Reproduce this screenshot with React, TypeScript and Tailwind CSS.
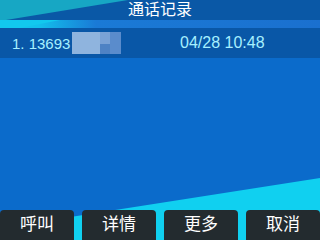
import React from "react";

const Background = () => (
  <svg
    className="absolute inset-0 h-full w-full"
    viewBox="0 0 320 240"
    preserveAspectRatio="none"
  >
    <defs>
      <linearGradient id="stripe" x1="0" x2="1" y1="0" y2="0">
        <stop offset="0" stopColor="#12c6ee" />
        <stop offset="0.12" stopColor="#12c0ec" />
        <stop offset="0.3" stopColor="#1a7ad6" />
        <stop offset="1" stopColor="#1a70cf" />
      </linearGradient>
    </defs>
    <rect x="0" y="0" width="320" height="240" fill="#0b6bcb" />
    <rect x="0" y="0" width="320" height="20" fill="#0a58a6" />
    <polygon points="0,0 128,0 0,21" fill="#17a7c4" />
    <rect x="0" y="20" width="320" height="8" fill="url(#stripe)" />
    <polygon points="0,20 60,20 20,28 0,28" fill="#12c8ee" />
    <rect x="0" y="28" width="320" height="30" fill="#0957a7" />
    <polygon points="0,228 320,178 320,240 0,240" fill="#10d0f0" />
  </svg>
);

const buttons = ["呼叫", "详情", "更多", "取消"];

export default function App() {
  return (
    <div
      className="relative w-[320px] h-[240px] overflow-hidden flex flex-col"
      style={{ fontFamily: '"Liberation Sans", "Noto Sans CJK SC", sans-serif' }}
    >
      <Background />
      <div className="relative h-[20px] flex items-center justify-center text-white text-[16px] leading-none">
        通话记录
      </div>
      <div className="relative h-[8px]" />
      <div className="relative h-[30px] flex items-center pl-[12px] text-[15px] text-[#a6f0ff] leading-none">
        <span className="w-[60px]">1. 13693</span>
        <span className="relative flex h-[22px] w-[49px]">
          <span className="w-[28px] h-full bg-[#8fb4de]" />
          <span className="flex flex-col w-[10px]">
            <span className="h-[12px] bg-[#7aa2d6]" />
            <span className="flex-1 bg-[#4e82c4]" />
          </span>
          <span className="w-[11px] h-full bg-[#5a8ccc]" />
        </span>
        <span className="ml-[59px] text-[16px]">04/28 10:48</span>
      </div>
      <div className="relative flex-1" />
      <div className="relative h-[30px] flex gap-[8px]">
        {buttons.map((b) => (
          <div
            key={b}
            className="w-[74px] rounded-t-[4px] bg-[#232b2f] text-white text-[17px] flex items-center justify-center"
          >
            {b}
          </div>
        ))}
      </div>
    </div>
  );
}
